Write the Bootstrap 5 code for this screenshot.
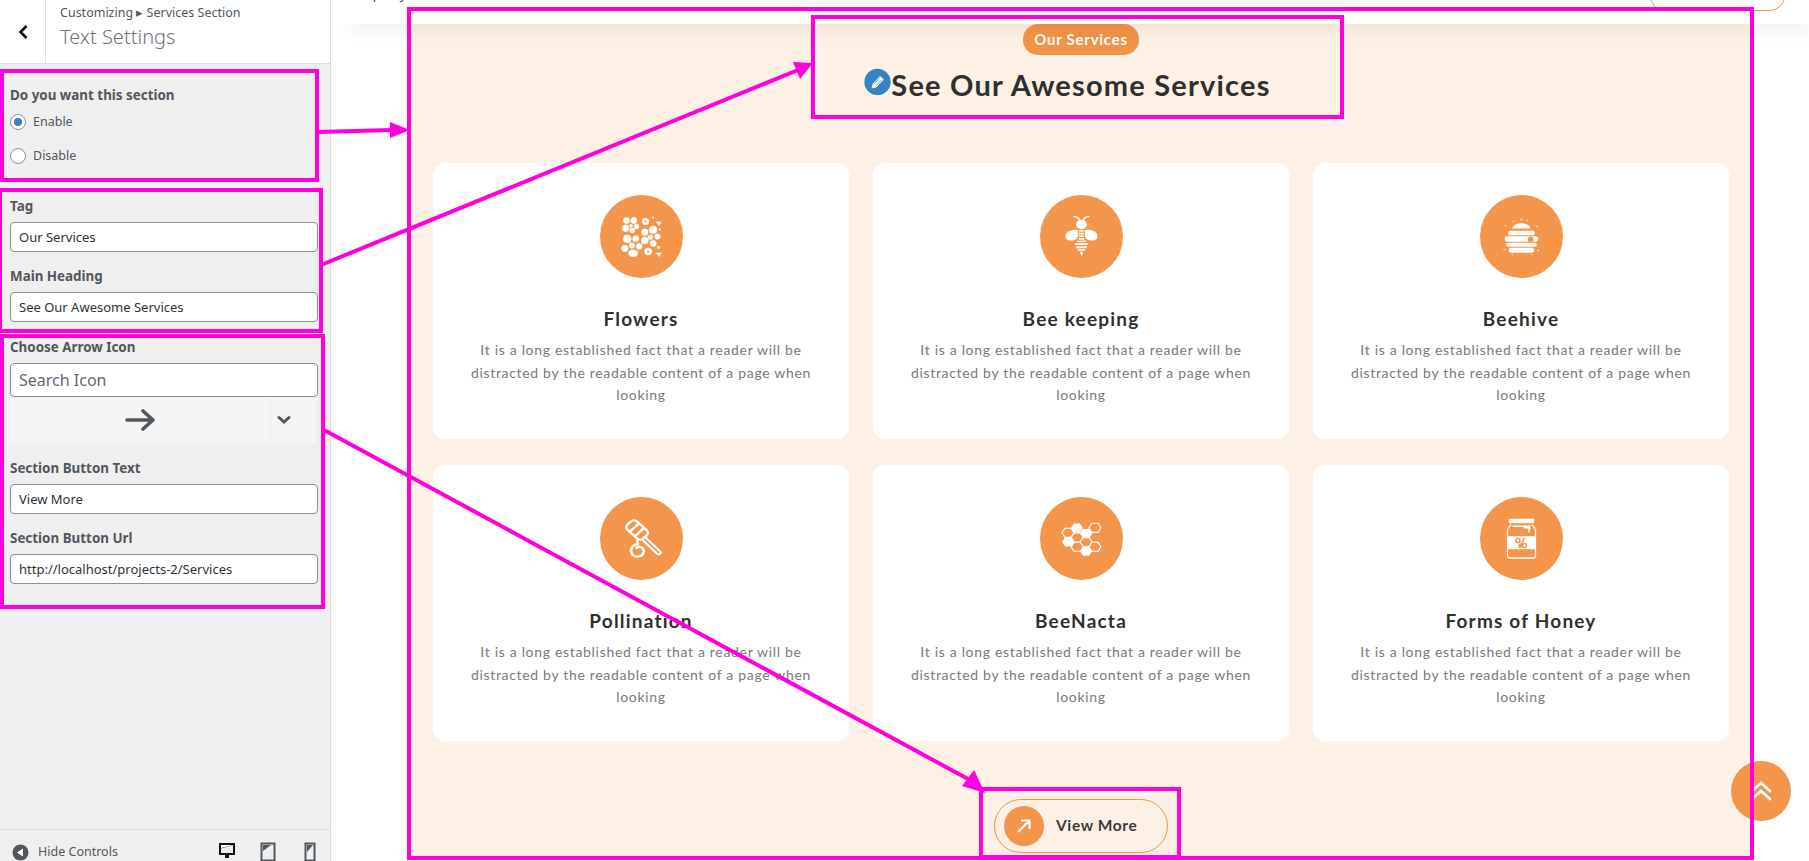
<!DOCTYPE html>
<html lang="en">

<head>
    <meta charset="UTF-8">
    <meta name="viewport" content="width=device-width, initial-scale=1.0">
    <title>Services Section</title>
    <link href="https://cdn.jsdelivr.net/npm/bootstrap@5.3.0/dist/css/bootstrap.min.css" rel="stylesheet">
    <style>
        body {
            height: 100vh;
            overflow: hidden;
            background: #fff;
            font-family: "Noto Sans", sans-serif;
        }
        /* customizer panel */
        .ctl-side {
            width: 331px;
            flex: none;
            height: 100vh;
            overflow: hidden;
            background: #efefef;
            border-right: 1px solid #ddd;
            color: #50575e;
        }
        .ctl-head {
            height: 64px;
            flex: none;
            background: #fff;
            border-bottom: 1px solid #ddd;
        }
        .ctl-back {
            width: 46px;
            border-right: 1px solid #ddd;
        }
        .ctl-crumb {
            font-size: 12.5px;
            line-height: 16px;
            margin-top: 5px;
            padding-left: 14px;
        }
        .ctl-title {
            font-size: 20px;
            font-weight: 300;
            line-height: 26px;
            color: #6d7479;
            margin-top: 3px;
            padding-left: 14px;
        }
        .ctl-body {
            height: 765px;
            flex: none;
            padding: 22px 12px 0 10px;
        }
        .ctl-label {
            font-size: 13.4px;
            font-weight: 700;
            line-height: 18px;
            margin-bottom: 7px;
            display: block;
        }
        .ctl-label-first {
            margin-bottom: 9px;
        }
        .ctl-label-tag {
            margin-top: 31px;
        }
        .ctl-radio {
            display: flex;
            align-items: center;
            gap: 7px;
            font-size: 12.5px;
            min-height: 16px;
            padding: 0;
            margin: 0 0 15px;
        }
        .ctl-radio .form-check-input {
            width: 16px;
            height: 16px;
            margin: 0;
            float: none;
            background-color: #fff;
            border: 1px solid #8c8f94;
        }
        .ctl-radio .form-check-input:checked {
            background-image: none;
            background-color: #3582c4;
            border: 4px solid #fff;
            outline: 1px solid #8c8f94;
            outline-offset: -1px;
        }
        .ctl-input {
            height: 30px;
            padding: 0 8px;
            font-size: 13px;
            color: #2c3338;
            border: 1px solid #8c8f94;
            border-radius: 4px;
            margin-bottom: 15px;
        }
        .ctl-input-heading {
            margin-bottom: 16px;
        }
        .ctl-search {
            height: 34px;
            font-size: 16px;
            margin-bottom: 1px;
        }
        .ctl-search::placeholder {
            color: #646970;
        }
        .ctl-pick {
            height: 45px;
            margin: 0 2px 16px 0;
            background: #f5f5f5;
        }
        .ctl-pick-drop {
            width: 46px;
            padding-left: 6px;
            border-left: 1px solid #eee;
        }
        .ctl-foot {
            height: 45px;
            flex: none;
            border-top: 1px solid #ddd;
            font-size: 12.5px;
            padding: 0 14px 0 12px;
        }
        .ctl-foot-text {
            margin-left: 9px;
        }
        /* preview */
        .site-wrap {
            height: 100vh;
            overflow: hidden;
        }
        .site-top {
            height: 24px;
            overflow: hidden;
            background: #fff;
            padding-left: 9px;
            box-shadow: 10px 10px 20px -8px rgba(0, 0, 0, .13);
            z-index: 2;
        }
        .site-top-link {
            font-size: 15px;
            line-height: 20px;
            margin-top: -18px;
            color: #555;
        }
        .site-top-btn {
            width: 135px;
            height: 30px;
            margin: -19px 24px 0 0;
            border: 1px solid #f19447;
            border-radius: 25px;
        }
        .srv-band {
            flex: 1;
            margin: 0 58px 0 79px;
            padding: 0 22px 0 23px;
            background: #fdf0e5;
        }
        .srv-head {
            margin-bottom: 58px;
        }
        .srv-tag {
            background: #f19447;
            color: #fff;
            font-family: Lato, sans-serif;
            font-size: 15px;
            font-weight: 700;
            letter-spacing: .75px;
            line-height: 31px;
            padding: 0 11px;
            border-radius: 15px;
        }
        .srv-title {
            font-family: Lato, sans-serif;
            font-size: 29px;
            font-weight: 700;
            letter-spacing: 1.2px;
            line-height: 40px;
            color: #2f2f2f;
            margin: 10px 0 0;
        }
        .srv-pencil {
            width: 27px;
            height: 29px;
            margin: 13px 0 0 -27px;
            flex: none;
        }
        .srv-grid {
            display: grid;
            grid-template-columns: repeat(3, 416px);
            gap: 26px 24px;
        }
        .srv-card {
            height: 276px;
            padding-top: 32px;
            border: 0;
            border-radius: 12px;
            text-align: center;
        }
        .srv-ico {
            width: 83px;
            height: 83px;
            margin: 0 auto;
            background: #f3954a;
            border-radius: 50%;
        }
        .srv-name {
            font-family: Lato, sans-serif;
            font-size: 19px;
            font-weight: 700;
            letter-spacing: 1.2px;
            line-height: 24px;
            color: #2f2f2f;
            margin: 29px 0 8px;
        }
        .srv-text {
            font-family: Lato, sans-serif;
            font-size: 14px;
            letter-spacing: .68px;
            line-height: 22.6px;
            color: #7a7a7a;
            margin: 0 auto;
            width: 350px;
        }
        .srv-more {
            width: 174px;
            height: 54px;
            margin: 58px auto 0;
            padding: 0 9px;
            gap: 12px;
            border: 1px solid #f19447;
            border-radius: 27px;
            font-family: Lato, sans-serif;
            font-size: 15.5px;
            font-weight: 700;
            letter-spacing: .6px;
            color: #3a3a3a;
        }
        .srv-more-ico {
            width: 40px;
            height: 40px;
            flex: none;
            background: #f3954a;
            border-radius: 50%;
        }
        .to-top {
            position: fixed;
            left: 1731px;
            top: 761px;
            width: 60px;
            height: 60px;
            background: #f3954a;
            border-radius: 50%;
            z-index: 3;
        }
        .mark-layer {
            position: fixed;
            left: 0;
            top: 0;
            width: 1809px;
            height: 861px;
            pointer-events: none;
            z-index: 5;
        }
    </style>
</head>

<body class="d-flex">

    <aside class="ctl-side d-flex flex-column">
        <div class="ctl-head d-flex">
            <div class="ctl-back d-flex align-items-center justify-content-center">
                <svg width="12" height="16" viewBox="0 0 12 16"><path d="M9.500 2 3.500 8l6 6" fill="none" stroke="#111" stroke-width="2.600"/></svg>
            </div>
            <div>
                <div class="ctl-crumb">Customizing ▸ Services Section</div>
                <div class="ctl-title">Text Settings</div>
            </div>
        </div>

        <div class="ctl-body">
            <label class="ctl-label ctl-label-first">Do you want this section</label>
            <div class="form-check ctl-radio">
                <input class="form-check-input" type="radio" name="sec" checked>
                <span>Enable</span>
            </div>
            <div class="form-check ctl-radio">
                <input class="form-check-input" type="radio" name="sec">
                <span>Disable</span>
            </div>

            <label class="ctl-label ctl-label-tag">Tag</label>
            <input class="form-control ctl-input" type="text" value="Our Services">
            <label class="ctl-label">Main Heading</label>
            <input class="form-control ctl-input ctl-input-heading" type="text" value="See Our Awesome Services">

            <label class="ctl-label">Choose Arrow Icon</label>
            <input class="form-control ctl-input ctl-search" type="text" placeholder="Search Icon">
            <div class="ctl-pick d-flex">
                <div class="flex-grow-1 d-flex align-items-center justify-content-center">
                    <svg width="30" height="24" viewBox="0 0 30 24"><path d="M2 12h26M18 3l10 9-10 9" fill="none" stroke="#50575e" stroke-width="3.600" stroke-linecap="round" stroke-linejoin="round"/></svg>
                </div>
                <div class="ctl-pick-drop d-flex align-items-center">
                    <svg width="14" height="10" viewBox="0 0 14 10"><path d="M2 2.500 7 7l5-4.500" fill="none" stroke="#50575e" stroke-width="3" stroke-linecap="round"/></svg>
                </div>
            </div>
            <label class="ctl-label">Section Button Text</label>
            <input class="form-control ctl-input" type="text" value="View More">
            <label class="ctl-label">Section Button Url</label>
            <input class="form-control ctl-input" type="text" value="http://localhost/projects-2/Services">
        </div>

        <div class="ctl-foot d-flex align-items-center">
            <svg width="17" height="17" viewBox="0 0 17 17"><circle cx="8.500" cy="8.500" r="8" fill="#50575e"/><path d="M11 4.500v8l-6-4z" fill="#fff"/></svg>
            <span class="ctl-foot-text flex-grow-1">Hide Controls</span>
            <svg width="18" height="20" viewBox="0 0 18 20" class="me-3"><path d="M1 1h16v12H1z" fill="#111"/><path d="M3 3h12L3 6z" fill="#fff"/><path d="M3 6.500 15 3v8H3z" fill="#eee"/><path d="M7 13h4v3H7z" fill="#111"/></svg>
            <svg width="16" height="20" viewBox="0 0 16 20" class="mx-2 me-4"><path d="M1.500 1.500h13v17h-13z" fill="none" stroke="#50575e" stroke-width="2"/><path d="M3 3h8L3 9z" fill="#50575e"/></svg>
            <svg width="12" height="20" viewBox="0 0 12 20" class="ms-1"><path d="M1.500 1.500h9v17h-9z" fill="none" stroke="#50575e" stroke-width="2"/><path d="M3 3h6L3 10z" fill="#50575e"/></svg>
        </div>
    </aside>

    <main class="site-wrap flex-grow-1 d-flex flex-column">
        <div class="site-top d-flex justify-content-between position-relative">
            <div class="site-top-link">Company</div>
            <div class="site-top-btn"></div>
        </div>

        <section class="srv-band">
            <div class="srv-head d-flex flex-column align-items-center">
                <span class="srv-tag">Our Services</span>
                <div class="d-flex">
                    <svg class="srv-pencil" viewBox="0 0 27 29"><circle cx="13.500" cy="15" r="13.500" fill="#fff"/><circle cx="13.500" cy="14" r="13.200" fill="#3582c4"/><path d="M7.500 20.500l1.200-4.800 7.300-7.700 3.800 3.500-7.300 7.700z" fill="#fff"/><path d="M10.500 15.500 16 9.500M12.500 17.500l5.500-6" stroke="#3582c4" stroke-width=".8"/></svg>
                    <h2 class="srv-title">See Our Awesome Services</h2>
                </div>
            </div>

            <div class="srv-grid">
                <div class="card srv-card">
                    <div class="srv-ico">
                        <svg width="83" height="83" viewBox="0 0 83 83">
                            <g transform="translate(21.500 21.500)" fill="#fff" stroke="#fff" stroke-width=".7">
                                <circle cx="5" cy="4" r="3"/><circle cx="12.300" cy="4" r="3"/><circle cx="4" cy="11.700" r="3.300"/><circle cx="10.700" cy="14" r="2.500"/><circle cx="15" cy="10" r="2.400"/><circle cx="9.500" cy="9.300" r="1.500"/>
                                <circle cx="24" cy="5" r="3.300"/><circle cx="31.600" cy="1" r=".8"/><path d="M35 5.500h4.500l-2 3.500z"/><circle cx="38.300" cy="13" r=".8"/>
                                <circle cx="31.600" cy="13.300" r="3.800"/><circle cx="23.300" cy="15.700" r="3.300"/><circle cx="5.700" cy="22.300" r="3.900"/><circle cx="14.300" cy="22.300" r="3"/><circle cx="23.300" cy="24" r="3.500"/><circle cx="29" cy="20.700" r="2.300"/><circle cx="36" cy="20" r="2.700"/><circle cx="31.600" cy="27" r="3"/>
                                <circle cx="10.300" cy="29" r="2.700"/><circle cx="3.300" cy="32" r="3.200"/><circle cx="17.700" cy="30" r="2.900"/><ellipse cx="11.700" cy="36.700" rx="4.500" ry="3.300"/><circle cx="26.700" cy="35" r="3.500"/><circle cx="37" cy="30.700" r="1.300"/><path d="M35 36.500h4.500l-2 3.500z"/>
                                <circle cx="24" cy="5" r="1" fill="#f3954a" stroke="none"/><circle cx="26.700" cy="35" r="1.100" fill="#f3954a" stroke="none"/>
                            </g>
                        </svg>
                    </div>
                    <h5 class="srv-name">Flowers</h5>
                    <p class="srv-text">It is a long established fact that a reader will be distracted by the readable content of a page when looking</p>
                </div>

                <div class="card srv-card">
                    <div class="srv-ico">
                        <svg width="83" height="83" viewBox="-41.500 -41.500 83 83">
                            <g transform="scale(1.148 1)">
                                <path d="M-1.500-16q-1-4-5.500-4M1.500-16q1-4 5.500-4" fill="none" stroke="#fff" stroke-width="1.300"/>
                                <g fill="#fff">
                                    <circle cx="0" cy="-12" r="4.700"/>
                                    <path d="M-3-6.500c-5-.8-11 1-11 6.500 0 3 3 4.500 6 4 3-.4 5-2.500 5-5z"/>
                                    <path d="M3-6.500c5-.8 11 1 11 6.500 0 3-3 4.500-6 4-3-.4-5-2.500-5-5z"/>
                                    <path d="M-2-6.500h4v1.700h-4zM-2.200-3.800h4.400v1.700h-4.400zM-2.200-1.100h4.400v1.700h-4.400zM-2.400 1.600h4.800v1.700h-4.800zM-5.500 6.500h11v2h-11zM-4.800 9.700h9.600v2h-9.600zM-3.200 12.700h6.400v1.600h-6.400zM-1.500 15.200h3l-1.500 5z"/>
                                    <path d="M-4 4.200h8v1.200h-8z"/>
                                </g>
                            </g>
                        </svg>
                    </div>
                    <h5 class="srv-name">Bee keeping</h5>
                    <p class="srv-text">It is a long established fact that a reader will be distracted by the readable content of a page when looking</p>
                </div>

                <div class="card srv-card">
                    <div class="srv-ico">
                        <svg width="83" height="83" viewBox="-41.500 -41.500 83 83">
                            <g transform="scale(1.148 1)" fill="#fff">
                                <path d="M-8-8c1-7 15-7 16 0z"/>
                                <rect x="-11.500" y="-5.700" width="23" height="4.400" rx="1.500"/>
                                <rect x="-14.500" y="-.3" width="29" height="5.600" rx="2"/>
                                <rect x="-13.500" y="6.300" width="27" height="4" rx="2"/>
                                <rect x="-11" y="11.300" width="22" height="5" rx="2"/>
                                <path d="M5.500 5.300v-2.800a2.500 2.500 0 0 1 5 0v2.800z" fill="#f3954a"/>
                                <circle cx="0" cy="-17" r=".8"/><circle cx="-7" cy="-15" r=".6"/><circle cx="5" cy="-16" r=".6"/><circle cx="-14" cy="-11" r=".6"/><circle cx="13.500" cy="-10" r=".7"/><circle cx="-15" cy="13" r=".7"/><circle cx="14.500" cy="14" r=".7"/><circle cx="-8" cy="18" r=".6"/><circle cx="9" cy="18" r=".6"/>
                            </g>
                        </svg>
                    </div>
                    <h5 class="srv-name">Beehive</h5>
                    <p class="srv-text">It is a long established fact that a reader will be distracted by the readable content of a page when looking</p>
                </div>

                <div class="card srv-card">
                    <div class="srv-ico">
                        <svg width="83" height="83" viewBox="-41.500 -41.500 83 83">
                            <g transform="scale(1.1 1)">
                                <g transform="rotate(-45 -4 -8.500)">
                                    <rect x="-10" y="-18.500" width="12" height="20" rx="4" fill="none" stroke="#fff" stroke-width="2.400"/>
                                    <path d="M-10-12H2M-10-5.500H2" stroke="#fff" stroke-width="2.400"/>
                                </g>
                                <path d="M3 1 15.500 14" stroke="#fff" stroke-width="5.500" stroke-linecap="round"/>
                                <path d="M3 1 15.500 14" stroke="#f3954a" stroke-width="1.800" stroke-linecap="round"/>
                                <path d="M-4 1-3.500 5.500C-7 6-10 9-9.500 13c.5 4 4 5.500 7 5 3.500-.5 5.500-4 4-7.500-1-2.500-4.500-3-6-1" fill="none" stroke="#fff" stroke-width="2.400" stroke-linecap="round"/>
                            </g>
                        </svg>
                    </div>
                    <h5 class="srv-name">Pollination</h5>
                    <p class="srv-text">It is a long established fact that a reader will be distracted by the readable content of a page when looking</p>
                </div>

                <div class="card srv-card">
                    <div class="srv-ico">
                        <svg width="83" height="83" viewBox="-41.500 -41.500 83 83">
                            <defs>
                                <polygon id="hexCell" points="5.300,0 2.650,4.600 -2.650,4.600 -5.300,0 -2.650,-4.600 2.650,-4.600"/>
                            </defs>
                            <g transform="scale(1.148 1)">
                                <g fill="#fff">
                                    <use href="#hexCell" x="-4" y="-10.500"/>
                                    <use href="#hexCell" x="-11.700" y="3.500"/>
                                    <use href="#hexCell" x="4" y="12.700"/>
                                    <use href="#hexCell" x="4" y="-5"/>
                                </g>
                                <g fill="#f3954a" stroke="#fff" stroke-width="1.100">
                                    <use href="#hexCell" x="11.700" y="-10.700"/>
                                    <use href="#hexCell" x="-11.700" y="-5.700"/>
                                    <use href="#hexCell" x="-3.700" y="-1"/>
                                    <use href="#hexCell" x="4" y="3.700"/>
                                    <use href="#hexCell" x="-3.700" y="8.300"/>
                                    <use href="#hexCell" x="11.700" y="8.300"/>
                                </g>
                            </g>
                        </svg>
                    </div>
                    <h5 class="srv-name">BeeNacta</h5>
                    <p class="srv-text">It is a long established fact that a reader will be distracted by the readable content of a page when looking</p>
                </div>

                <div class="card srv-card">
                    <div class="srv-ico">
                        <svg width="83" height="83" viewBox="-41.500 -41.500 83 83">
                            <rect x="-12.700" y="-19.700" width="25.400" height="4.500" rx="1" fill="#fff"/>
                            <path d="M-10.500-14c-1 2-3.500 3-3.500 6v25c0 1.500 1 2.500 2.500 2.500h23c1.500 0 2.500-1 2.500-2.500V-8c0-3-2.500-4-3.500-6" fill="none" stroke="#fff" stroke-width="1.300"/>
                            <path d="M-9-13H9v4H8v3H6.500v-4H2v-1.500H-9z" fill="#fff"/>
                            <rect x="-14" y="-2.300" width="28.500" height="13" fill="#fff"/>
                            <g fill="none" stroke="#f3954a" stroke-width="1.500">
                                <circle cx="-3.500" cy="2" r="2"/>
                                <circle cx="3" cy="7" r="2"/>
                                <circle cx="-1" cy="7" r="1.600"/>
                                <path d="M3-.5-2 9.500"/>
                            </g>
                        </svg>
                    </div>
                    <h5 class="srv-name">Forms of Honey</h5>
                    <p class="srv-text">It is a long established fact that a reader will be distracted by the readable content of a page when looking</p>
                </div>
            </div>

            <a class="srv-more d-flex align-items-center text-decoration-none">
                <span class="srv-more-ico d-flex align-items-center justify-content-center">
                    <svg width="20" height="20" viewBox="0 0 20 20"><path d="M4 16 15.500 4.500M7 4.500h8.500V13" fill="none" stroke="#fff" stroke-width="2.200"/></svg>
                </span>
                View More
            </a>
        </section>
    </main>

    <div class="to-top d-flex align-items-center justify-content-center">
        <svg width="24" height="24" viewBox="0 0 24 24"><path d="M3 12 12 4l9 8M3 20l9-8 9 8" fill="none" stroke="#fff" stroke-width="2.800" stroke-linecap="round"/></svg>
    </div>

    <!-- annotations drawn on top of the screenshot -->
    <svg class="mark-layer" viewBox="0 0 1809 861">
        <g fill="none" stroke="#ff00dc" stroke-width="4">
            <rect x="2" y="71" width="315" height="109"/>
            <rect x="0" y="190" width="321" height="141"/>
            <rect x="2" y="336" width="321" height="271"/>
            <rect x="409" y="9" width="1343" height="849"/>
            <rect x="813" y="17" width="529" height="100"/>
            <rect x="981" y="789" width="198" height="68"/>
            <path d="M318 132 392 130M321 265 798 70M324 430 968 779"/>
        </g>
        <g fill="#ff00dc">
            <path d="M410 130 390 122V138z"/>
            <path d="M813 63 793 62 800 79z"/>
            <path d="M985 793 974 770 962 786z"/>
        </g>
    </svg>

    <script src="https://cdn.jsdelivr.net/npm/bootstrap@5.3.0/dist/js/bootstrap.bundle.min.js"></script>
</body>

</html>
